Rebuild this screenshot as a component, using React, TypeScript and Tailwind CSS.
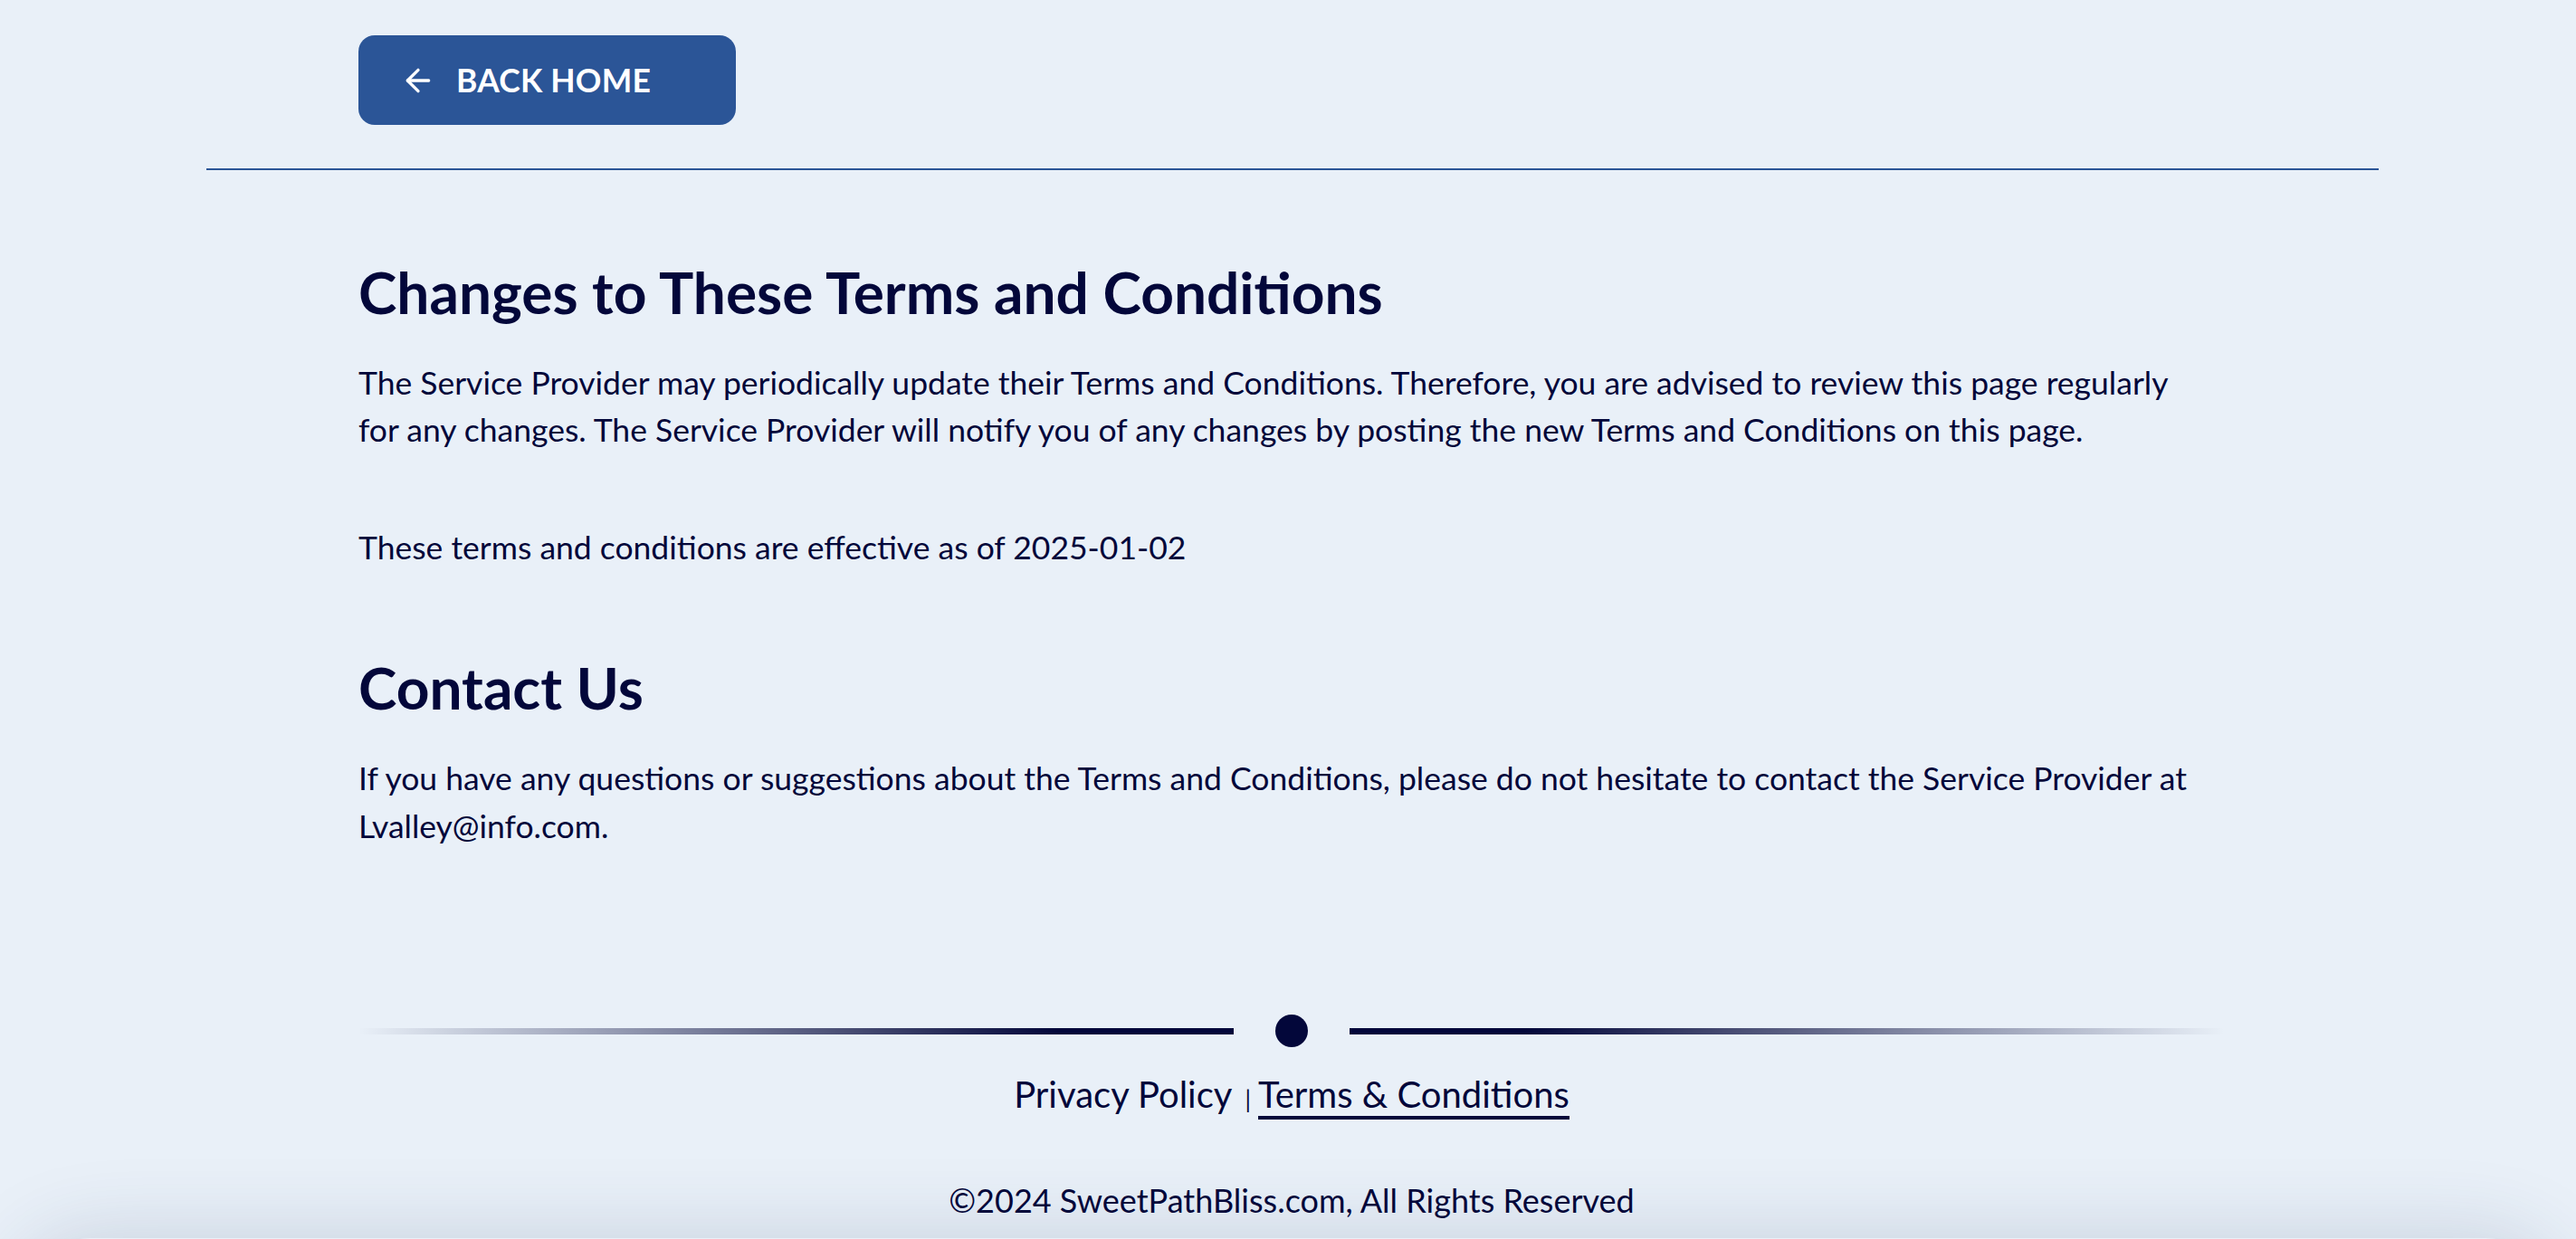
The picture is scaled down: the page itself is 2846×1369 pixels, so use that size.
import { ArrowLeft } from 'lucide-react';

const ink = 'text-[#03073a]';

export default function App() {
  return (
    <div className="min-h-screen bg-[#e9f0f8] font-['Lato','Liberation_Sans',sans-serif] overflow-hidden">
      <div className="w-[2400px] ml-[228px] pt-[39px]">
        {/* Back button */}
        <div className="pl-[168px]">
          <a
            href="#"
            className="flex items-center w-[417px] h-[99px] rounded-[18px] bg-[#2b5597] text-white pl-[46px] gap-[22px]"
          >
            <ArrowLeft size={40} strokeWidth={2} />
            <span className="text-[35.5px] font-bold tracking-[0.2px]">BACK HOME</span>
          </a>
        </div>
        <div className="mt-[48px] h-[2px] bg-[#2b5597]" />

        {/* Content */}
        <div className={`pl-[168px] pr-[190px] ${ink}`}>
          <h2 className="mt-[97px] text-[64px] leading-[1.2] font-bold">Changes to These Terms and Conditions</h2>
          <p className="mt-[35px] text-[35.5px] leading-[52.5px]">
            The Service Provider may periodically update their Terms and Conditions. Therefore, you are advised to review this page regularly for any changes. The Service Provider will notify you of any changes by posting the new Terms and Conditions on this page.
          </p>
          <p className="mt-[77px] text-[35.5px] leading-[52.5px]">These terms and conditions are effective as of 2025-01-02</p>

          <h2 className="mt-[91px] text-[64px] leading-[1.2] font-bold">Contact Us</h2>
          <p className="mt-[35px] text-[35.5px] leading-[52.5px]">
            If you have any questions or suggestions about the Terms and Conditions, please do not hesitate to contact the Service Provider at Lvalley@info.com.
          </p>
        </div>

        {/* Footer */}
        <footer className={`mt-[182px] pl-[168px] pr-[170px] ${ink}`}>
          <div className="flex items-center gap-[46px]">
            <div className="flex-1 h-[7px] bg-[linear-gradient(to_right,transparent,#03073a_80%)]" />
            <div className="w-[36px] h-[36px] rounded-full bg-[#03073a]" />
            <div className="flex-1 h-[7px] bg-[linear-gradient(to_left,transparent,#03073a_80%)]" />
          </div>
          <div className="mt-[28px] flex items-baseline justify-center text-[40px] leading-[48px]">
            <a href="#">Privacy Policy</a>
            <span className="ml-[14px] mr-[8px] text-[26px]">|</span>
            <a href="#" className="inline-block border-b-4 border-[#03073a]">Terms &amp; Conditions</a>
          </div>
          <p className="mt-[66px] text-center text-[36px] leading-[44px]">©2024 SweetPathBliss.com, All Rights Reserved</p>
        </footer>
      </div>
      <div className="mt-[20px] mx-[20px] h-[200px] rounded-[80px] bg-[#e9f0f8] shadow-[0_0_90px_rgba(40,60,100,0.18)]" />
    </div>
  );
}
